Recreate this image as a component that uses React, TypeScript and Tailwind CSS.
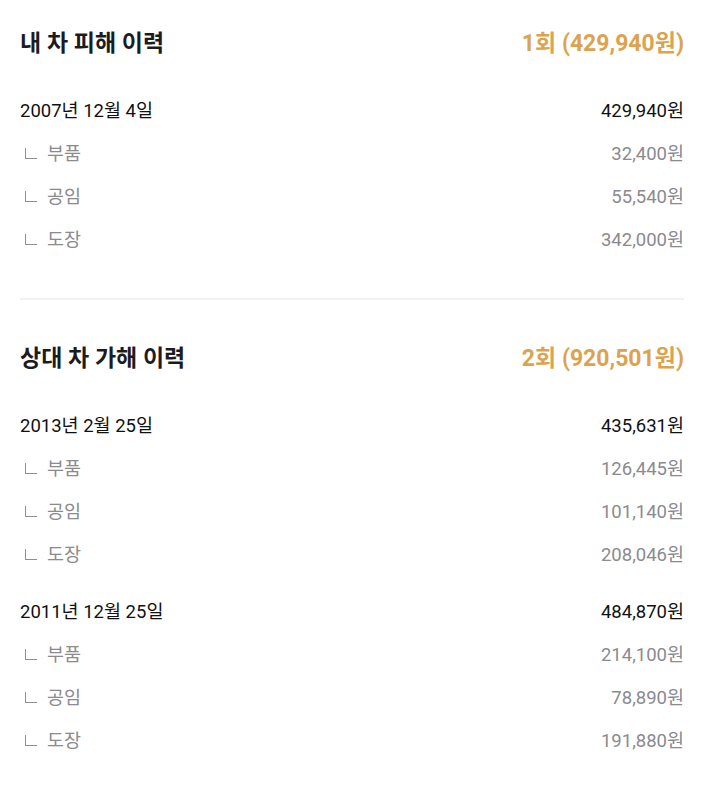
const font = { fontFamily: "Roboto, 'Noto Sans CJK KR', sans-serif" };

type Part = { label: string; amount: string };
type Accident = { date: string; total: string; parts: Part[] };

const myDamage: Accident[] = [
  {
    date: "2007년 12월 4일",
    total: "429,940원",
    parts: [
      { label: "부품", amount: "32,400원" },
      { label: "공임", amount: "55,540원" },
      { label: "도장", amount: "342,000원" },
    ],
  },
];

const otherDamage: Accident[] = [
  {
    date: "2013년 2월 25일",
    total: "435,631원",
    parts: [
      { label: "부품", amount: "126,445원" },
      { label: "공임", amount: "101,140원" },
      { label: "도장", amount: "208,046원" },
    ],
  },
  {
    date: "2011년 12월 25일",
    total: "484,870원",
    parts: [
      { label: "부품", amount: "214,100원" },
      { label: "공임", amount: "78,890원" },
      { label: "도장", amount: "191,880원" },
    ],
  },
];

function HistorySection({ title, summary, items }: { title: string; summary: string; items: Accident[] }) {
  return (
    <section className="px-5">
      <div className="flex h-8 items-center justify-between">
        <h2 className="text-[23px] font-bold text-[#1c1c1e]">{title}</h2>
        <span className="text-[23px] font-bold text-[#dca34e]">{summary}</span>
      </div>
      <div className="mt-[30px] space-y-[14px]">
        {items.map((item) => (
          <div key={item.date}>
            <div className="flex h-[43px] items-center justify-between text-[18.5px] text-[#111]">
              <span>{item.date}</span>
              <span>{item.total}</span>
            </div>
            {item.parts.map((p) => (
              <div key={p.label} className="flex h-[43px] items-center justify-between text-[18.5px] text-[#8a8a8f]">
                <span className="flex items-center">
                  <span className="mb-[3px] ml-[5px] mr-[10px] h-[11px] w-[12px] border-b border-l border-[#8e8e93]" />
                  {p.label}
                </span>
                <span>{p.amount}</span>
              </div>
            ))}
          </div>
        ))}
      </div>
    </section>
  );
}

export default function App() {
  return (
    <div className="min-h-[795px] bg-white pt-[28px]" style={font}>
      <HistorySection title="내 차 피해 이력" summary="1회 (429,940원)" items={myDamage} />
      <div className="mx-5 mt-[36px] mb-[43px] h-[2px] bg-[#f1f1f3]" />
      <HistorySection title="상대 차 가해 이력" summary="2회 (920,501원)" items={otherDamage} />
    </div>
  );
}
